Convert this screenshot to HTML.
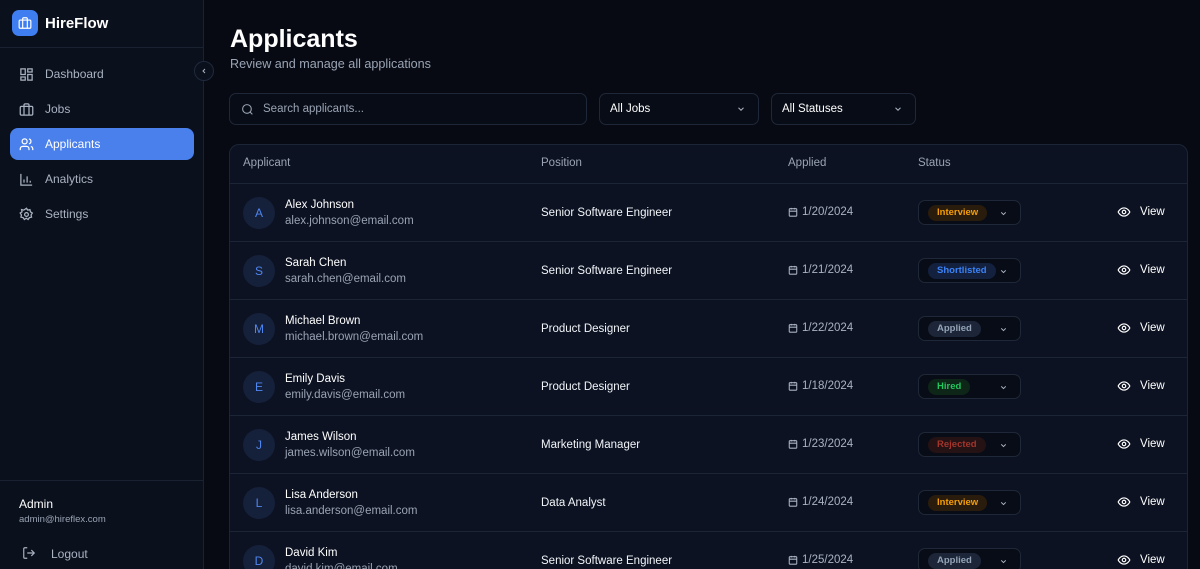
<!DOCTYPE html>
<html style="width:1200px;height:569px;overflow:hidden"><head><meta charset="utf-8"><style>
*{box-sizing:border-box;margin:0;padding:0}
body{width:1200px;height:569px;overflow:hidden;background:#070a13;font-family:"Liberation Sans",sans-serif;color:#e5e7eb;position:relative}
.sb{position:absolute;left:0;top:0;width:204px;height:569px;background:#0b101d;border-right:1px solid #1a2232}
.logo{position:absolute;left:12px;top:10px;width:26px;height:26px;border-radius:7px;background:#3f7ef0;display:flex;align-items:center;justify-content:center}
.brand{position:absolute;left:45px;top:15px;font-weight:bold;font-size:15px;color:#fff}
.hr{position:absolute;left:0;width:204px;height:1px;background:#1a2232}
.nav{position:absolute;left:10px;width:184px;height:32px;border-radius:8px;display:flex;align-items:center;padding-left:9px;font-size:12px;color:#aab3c2}
.nav svg{margin-right:11px}
.nav.act{background:#4a80ec;color:#fff}
.coll{position:absolute;left:194px;top:61px;width:20px;height:20px;border-radius:50%;border:1px solid #1f2a3c;background:#0b101d;display:flex;align-items:center;justify-content:center}
h1{position:absolute;left:230px;top:25px;font-size:25px;font-weight:bold;color:#fff}
.sub{position:absolute;left:230px;top:57px;font-size:12.6px;color:#9aa4b4}
.inp{position:absolute;top:93px;height:32px;border:1px solid #1f2838;border-radius:7px;background:#080c16;font-size:11.5px;display:flex;align-items:center}
.tbl{position:absolute;left:229px;top:144px;width:959px;height:440px;border:1px solid #1c2536;border-radius:10px;background:#0c1221;overflow:hidden}
.th{position:absolute;top:12px;font-size:11.5px;color:#9aa4b4}
.row{position:absolute;left:0;width:959px;height:58px;border-top:1px solid #1c2536}
.av{position:absolute;left:13px;top:13px;width:32px;height:32px;border-radius:50%;background:#15203a;color:#4f86f0;font-size:12px;display:flex;align-items:center;justify-content:center}
.nm{position:absolute;left:55px;top:15px;font-size:11.5px;color:#fff}
.em{position:absolute;left:55px;top:31px;font-size:11.5px;color:#9aa4b4}
.pos{position:absolute;left:311px;top:23px;font-size:11.5px;color:#f1f5f9}
.dt{position:absolute;left:558px;top:22px;font-size:11.5px;color:#aab3c2;display:flex;align-items:center;gap:4px}
.sel{position:absolute;left:688px;top:16px;width:103px;height:25px;border:1px solid #1f2838;border-radius:7px;background:#080c16}
.bd{position:absolute;left:9px;top:4px;height:16px;border-radius:8px;font-size:9.5px;font-weight:bold;padding:0 9px;line-height:16px}
.sel svg{position:absolute;right:12px;top:8px}
.vw{position:absolute;left:887px;top:21px;font-size:11.5px;color:#fff;display:flex;align-items:center;gap:9px}
</style></head><body>
<div class="sb">
<div class="logo"><svg width="14" height="14" viewBox="0 0 24 24" fill="none" stroke="#fff" stroke-width="2"><rect x="2" y="7" width="20" height="14" rx="2"/><path d="M16 21V5a2 2 0 0 0-2-2h-4a2 2 0 0 0-2 2v16"/></svg></div>
<div class="brand">HireFlow</div>
<div class="hr" style="top:47px"></div>
<div class="nav" style="top:58px"><svg width="15" height="15" viewBox="0 0 24 24" fill="none" stroke="#aab3c2" stroke-width="2"><rect x="3" y="3" width="7" height="9"/><rect x="14" y="3" width="7" height="5"/><rect x="14" y="12" width="7" height="9"/><rect x="3" y="16" width="7" height="5"/></svg>Dashboard</div>
<div class="nav" style="top:93px"><svg width="15" height="15" viewBox="0 0 24 24" fill="none" stroke="#aab3c2" stroke-width="2"><rect x="2" y="7" width="20" height="14" rx="2"/><path d="M16 21V5a2 2 0 0 0-2-2h-4a2 2 0 0 0-2 2v16"/></svg>Jobs</div>
<div class="nav act" style="top:128px"><svg width="15" height="15" viewBox="0 0 24 24" fill="none" stroke="#fff" stroke-width="2"><path d="M16 21v-2a4 4 0 0 0-4-4H6a4 4 0 0 0-4 4v2"/><circle cx="9" cy="7" r="4"/><path d="M22 21v-2a4 4 0 0 0-3-3.9M16 3.1a4 4 0 0 1 0 7.8"/></svg>Applicants</div>
<div class="nav" style="top:163px"><svg width="15" height="15" viewBox="0 0 24 24" fill="none" stroke="#aab3c2" stroke-width="2"><path d="M3 3v18h18M8 17v-5M13 17V7M18 17v-3"/></svg>Analytics</div>
<div class="nav" style="top:198px"><svg width="15" height="15" viewBox="0 0 24 24" fill="none" stroke="#aab3c2" stroke-width="2"><circle cx="12" cy="12" r="3"/><path d="M12 2l2 3 3.5-.8.8 3.5 3 2-2 3 .8 3.5-3.5.8-2 3-3-2-3 2-2-3-3.5-.8.8-3.5-2-3 3-2-.8-3.5 3.5.8z"/></svg>Settings</div>
<div class="hr" style="top:480px"></div>
<div style="position:absolute;left:19px;top:497px;font-size:12px;color:#fff">Admin</div>
<div style="position:absolute;left:19px;top:514px;font-size:9.5px;color:#9aa4b4">admin@hireflex.com</div>
<div style="position:absolute;left:22px;top:546px"><svg width="14" height="14" viewBox="0 0 24 24" fill="none" stroke="#aab3c2" stroke-width="2"><path d="M9 21H5a2 2 0 0 1-2-2V5a2 2 0 0 1 2-2h4M16 17l5-5-5-5M21 12H9"/></svg></div>
<div style="position:absolute;left:51px;top:547px;font-size:12px;color:#aab3c2">Logout</div>
</div>
<div class="coll"><svg width="8" height="8" viewBox="0 0 24 24" fill="none" stroke="#aab3c2" stroke-width="3"><path d="M15 18l-6-6 6-6"/></svg></div>
<h1>Applicants</h1>
<div class="sub">Review and manage all applications</div>
<div class="inp" style="left:229px;width:358px;color:#9aa4b4;padding-left:11px"><svg width="13" height="13" viewBox="0 0 24 24" fill="none" stroke="#9aa4b4" stroke-width="2"><circle cx="11" cy="11" r="8"/><path d="M21 21l-4.3-4.3"/></svg><span style="margin-left:9px">Search applicants...</span></div>
<div class="inp" style="left:599px;width:160px;color:#fff;padding-left:10px">All Jobs<svg style="position:absolute;right:12px" width="10" height="10" viewBox="0 0 24 24" fill="none" stroke="#aab3c2" stroke-width="2.5"><path d="M6 9l6 6 6-6"/></svg></div>
<div class="inp" style="left:771px;width:145px;color:#fff;padding-left:10px">All Statuses<svg style="position:absolute;right:12px" width="10" height="10" viewBox="0 0 24 24" fill="none" stroke="#aab3c2" stroke-width="2.5"><path d="M6 9l6 6 6-6"/></svg></div>
<div class="tbl">
<div class="th" style="left:13px">Applicant</div>
<div class="th" style="left:311px">Position</div>
<div class="th" style="left:558px">Applied</div>
<div class="th" style="left:688px">Status</div>
<div id="rows"></div>
</div>
<script>
var d=[["A","Alex Johnson","alex.johnson@email.com","Senior Software Engineer","1/20/2024","Interview"],
["S","Sarah Chen","sarah.chen@email.com","Senior Software Engineer","1/21/2024","Shortlisted"],
["M","Michael Brown","michael.brown@email.com","Product Designer","1/22/2024","Applied"],
["E","Emily Davis","emily.davis@email.com","Product Designer","1/18/2024","Hired"],
["J","James Wilson","james.wilson@email.com","Marketing Manager","1/23/2024","Rejected"],
["L","Lisa Anderson","lisa.anderson@email.com","Data Analyst","1/24/2024","Interview"],
["D","David Kim","david.kim@email.com","Senior Software Engineer","1/25/2024","Applied"]];
var st={Interview:["#f59e0b","#2a1c0c"],Shortlisted:["#3b82f6","#13213f"],Applied:["#94a3b8","#1c2638"],Hired:["#22c55e","#0d2618"],Rejected:["#a3352c","#241214"]};
var h="";d.forEach(function(r,i){var s=st[r[5]];h+='<div class="row" style="top:'+(38+i*58)+'px"><div class="av">'+r[0]+'</div><div class="nm">'+r[1]+'</div><div class="em">'+r[2]+'</div><div class="pos">'+r[3]+'</div><div class="dt"><svg width="10" height="10" viewBox="0 0 24 24" fill="none" stroke="#aab3c2" stroke-width="2.5"><rect x="3" y="4" width="18" height="18" rx="2"/><path d="M16 2v4M8 2v4M3 10h18"/></svg>'+r[4]+'</div><div class="sel"><span class="bd" style="color:'+s[0]+';background:'+s[1]+'">'+r[5]+'</span><svg width="9" height="9" viewBox="0 0 24 24" fill="none" stroke="#aab3c2" stroke-width="2.5"><path d="M6 9l6 6 6-6"/></svg></div><div class="vw"><svg width="14" height="14" viewBox="0 0 24 24" fill="none" stroke="#fff" stroke-width="2"><path d="M2 12s3.5-7 10-7 10 7 10 7-3.5 7-10 7S2 12 2 12z"/><circle cx="12" cy="12" r="3"/></svg>View</div></div>'});
document.getElementById("rows").innerHTML=h;
</script>
</body></html>
